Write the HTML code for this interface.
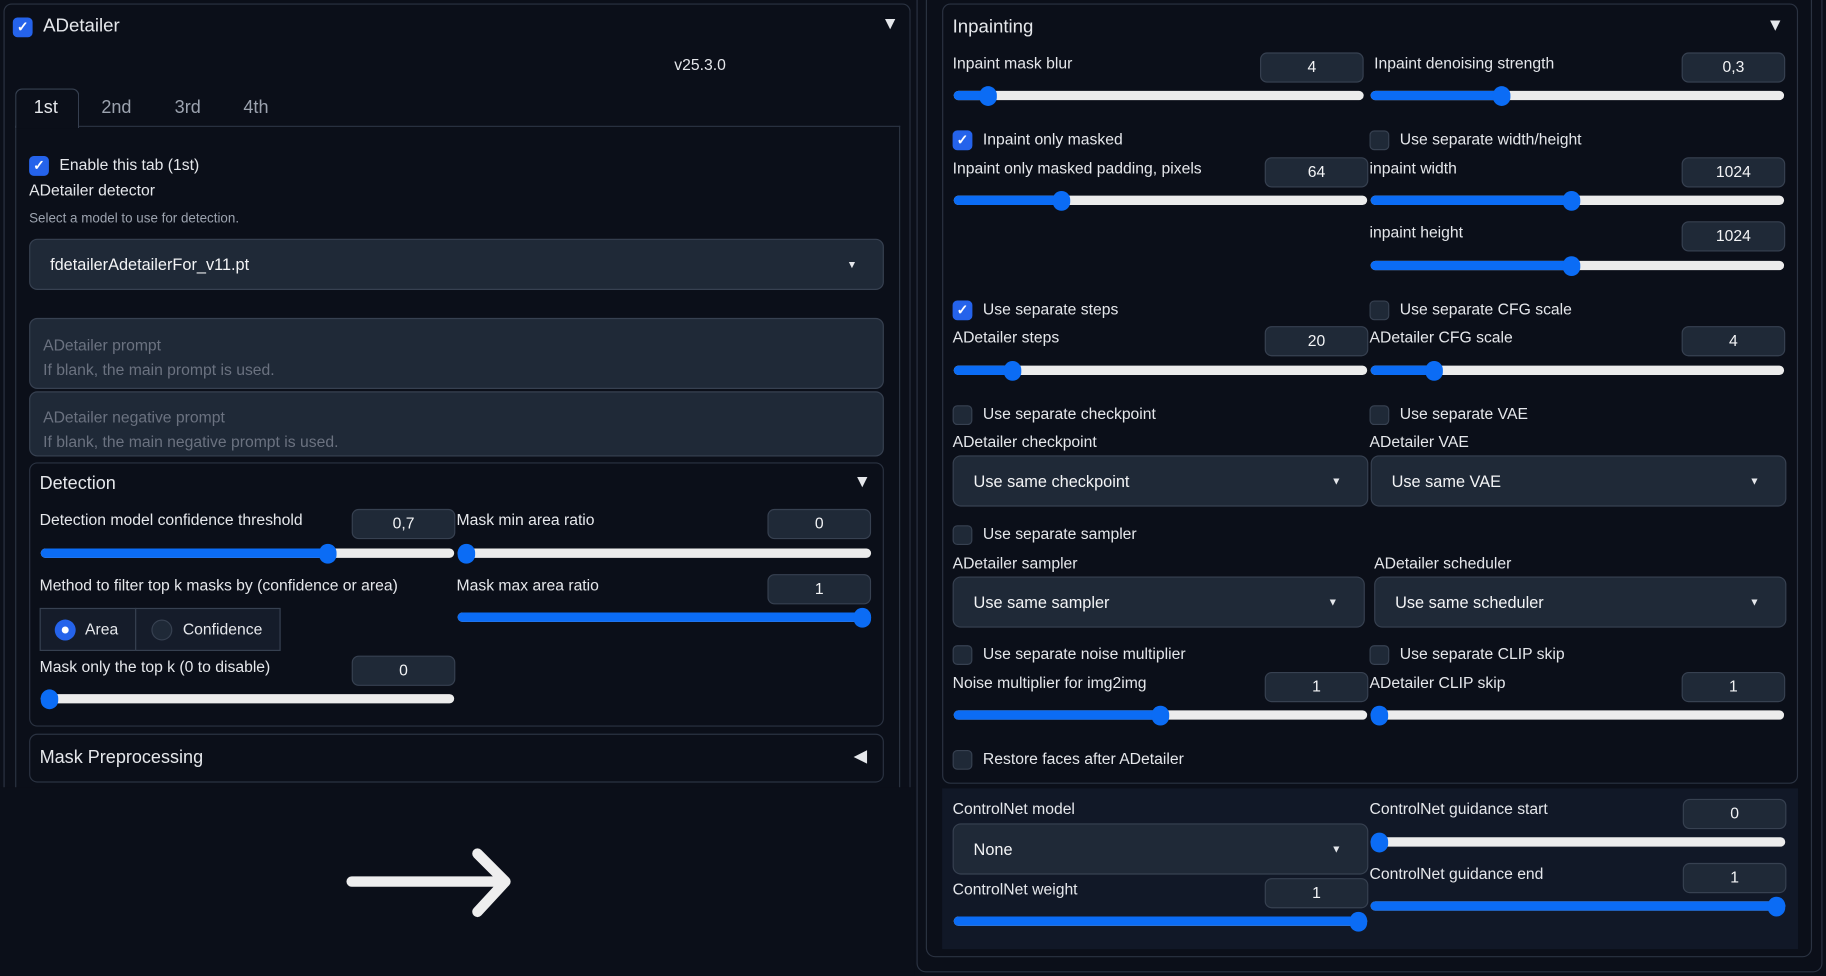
<!DOCTYPE html>
<html><head><meta charset="utf-8"><style>
html,body{margin:0;padding:0;background:#0b0f19;width:1826px;height:976px;overflow:hidden}
#w{position:absolute;left:0;top:0;width:1568px;height:838px;transform:scale(1.16454);transform-origin:0 0;font-family:"Liberation Sans",sans-serif;color:#e5e7eb}
#w div{position:absolute;box-sizing:border-box}
.l{font-size:13.5px;line-height:18px;white-space:nowrap;color:#e5e7eb}
.t{font-size:15.5px;line-height:20px;white-space:nowrap}
.g{color:#9ca3af}
.n{background:#1f2937;border:1px solid #374151;border-radius:6px;width:89px;height:26px;font-size:13.5px;line-height:24px;text-align:center;color:#f3f4f6}
.s{height:8px;border-radius:4px;background:#ececec}
.s .f{left:0;top:0;height:8px;border-radius:4px;background:#0b6cf5}
.s .h{top:-4px;width:15px;height:17px;border-radius:8px;background:#0b6cf5}
.c{width:17px;height:17px;border-radius:4px;background:#1f2937;border:1px solid #374151}
.c.k{background:#2563eb;border-color:#2563eb;color:#fff;font-size:12px;line-height:15px;text-align:center;font-weight:bold}
.d{background:#1f2937;border:1px solid #374151;border-radius:7px;height:44px;font-size:14px;line-height:42px;padding-left:17px;color:#f3f4f6;white-space:nowrap}
.d .a{right:22px;top:0;font-size:9px;line-height:42px;color:#e5e7eb}
.p{border:1px solid #2b3342;border-radius:7px}
</style></head><body><div id="w">

<!-- LEFT -->
<div style="left:3px;top:3px;width:779px;height:690px;border:1px solid #2b3342;border-bottom:none;border-radius:7px 7px 0 0"></div>
<div class="c k" style="left:11px;top:15px">✓</div>
<div class="t" style="left:37px;top:13px;font-size:16px">ADetailer</div>
<div style="left:757px;top:12px;font-size:15px">▼</div>
<div class="l" style="left:579px;top:47px">v25.3.0</div>
<div style="left:13px;top:76px;width:55px;height:34px;border:1px solid #374151;border-bottom:none;border-radius:6px 6px 0 0;background:#0b0f19;z-index:2"></div>
<div style="left:13px;top:108px;width:760px;height:580px;border:1px solid #2b3342;border-bottom:none"></div>
<div class="t" style="left:29px;top:83px;z-index:3">1st</div>
<div class="t g" style="left:87px;top:83px">2nd</div>
<div class="t g" style="left:150px;top:83px">3rd</div>
<div class="t g" style="left:209px;top:83px">4th</div>
<div class="c k" style="left:25px;top:134px">✓</div>
<div class="l" style="left:51px;top:133px">Enable this tab (1st)</div>
<div class="l" style="left:25px;top:155px">ADetailer detector</div>
<div class="l g" style="left:25px;top:179px;font-size:11.5px">Select a model to use for detection.</div>
<div class="d" style="left:25px;top:205px;width:734px">fdetailerAdetailerFor_v11.pt<div class="a">▼</div></div>
<div style="left:25px;top:273px;width:734px;height:61px;background:#1f2937;border:1px solid #374151;border-radius:7px;padding:12px 11px;font-size:13.5px;line-height:21px;color:#6b7280">ADetailer prompt<br>If blank, the main prompt is used.</div>
<div style="left:25px;top:336px;width:734px;height:56px;background:#1f2937;border:1px solid #374151;border-radius:7px;padding:11px 11px;font-size:13.5px;line-height:21px;color:#6b7280">ADetailer negative prompt<br>If blank, the main negative prompt is used.</div>

<div class="p" style="left:25px;top:397px;width:734px;height:227px"></div>
<div class="t" style="left:34px;top:406px">Detection</div>
<div style="left:733px;top:405px;font-size:15px">▼</div>
<div class="l" style="left:34px;top:438px">Detection model confidence threshold</div>
<div class="n" style="left:302px;top:437px">0,7</div>
<div class="s" style="left:35px;top:471px;width:355px"><div class="f" style="width:246px"></div><div class="h" style="left:239px"></div></div>
<div class="l" style="left:392px;top:438px">Mask min area ratio</div>
<div class="n" style="left:659px;top:437px">0</div>
<div class="s" style="left:393px;top:471px;width:355px"><div class="f" style="width:8px"></div><div class="h" style="left:0px"></div></div>
<div class="l" style="left:34px;top:494px">Method to filter top k masks by (confidence or area)</div>
<div style="left:34px;top:522px;width:83px;height:37px;background:#151c2a;border:1px solid #374151"></div>
<div style="left:116px;top:522px;width:125px;height:37px;background:#151c2a;border:1px solid #374151"></div>
<div style="left:47px;top:532px;width:18px;height:18px;border-radius:9px;background:#2563eb"></div>
<div style="left:53px;top:538px;width:6px;height:6px;border-radius:3px;background:#fff"></div>
<div class="l" style="left:73px;top:532px">Area</div>
<div style="left:130px;top:532px;width:18px;height:18px;border-radius:9px;background:#1f2937;border:1px solid #374151"></div>
<div class="l" style="left:157px;top:532px">Confidence</div>
<div class="l" style="left:392px;top:494px">Mask max area ratio</div>
<div class="n" style="left:659px;top:493px">1</div>
<div class="s" style="left:393px;top:526px;width:355px"><div class="f" style="width:355px"></div><div class="h" style="left:340px"></div></div>
<div class="l" style="left:34px;top:564px">Mask only the top k (0 to disable)</div>
<div class="n" style="left:302px;top:563px">0</div>
<div class="s" style="left:35px;top:596px;width:355px"><div class="f" style="width:8px"></div><div class="h" style="left:0px"></div></div>
<div class="p" style="left:25px;top:630px;width:734px;height:42px"></div>
<div class="t" style="left:34px;top:641px">Mask Preprocessing</div>
<div style="left:733px;top:640px;font-size:15px">◀</div>
<div style="left:0;top:676px;width:785px;height:162px;background:#0b0f19"></div>
<svg style="position:absolute;left:290px;top:725px" width="160" height="70"><path d="M12 32 H142 M120 8 L144 32 L120 58" fill="none" stroke="#eeeeee" stroke-width="9" stroke-linecap="round" stroke-linejoin="round"/></svg>

<!-- RIGHT -->
<div style="left:787px;top:-8px;width:778px;height:843px;border:1px solid #2b3342;border-radius:8px"></div>
<div style="left:795px;top:-8px;width:761px;height:830px;border:1px solid #2b3342;border-radius:8px"></div>
<div class="p" style="left:809px;top:3px;width:735px;height:670px"></div>
<div class="t" style="left:818px;top:14px;font-size:16px">Inpainting</div>
<div style="left:1517px;top:13px;font-size:15px">▼</div>

<div class="l" style="left:818px;top:46px">Inpaint mask blur</div>
<div class="n" style="left:1082px;top:45px">4</div>
<div class="s" style="left:819px;top:78px;width:352px"><div class="f" style="width:30px"></div><div class="h" style="left:22px"></div></div>
<div class="l" style="left:1180px;top:46px">Inpaint denoising strength</div>
<div class="n" style="left:1444px;top:45px">0,3</div>
<div class="s" style="left:1177px;top:78px;width:355px"><div class="f" style="width:113px"></div><div class="h" style="left:105px"></div></div>

<div class="c k" style="left:818px;top:112px">✓</div>
<div class="l" style="left:844px;top:111px">Inpaint only masked</div>
<div class="c" style="left:1176px;top:112px"></div>
<div class="l" style="left:1202px;top:111px">Use separate width/height</div>
<div class="l" style="left:818px;top:136px">Inpaint only masked padding, pixels</div>
<div class="n" style="left:1086px;top:135px">64</div>
<div class="s" style="left:819px;top:168px;width:355px"><div class="f" style="width:93px"></div><div class="h" style="left:85px"></div></div>
<div class="l" style="left:1176px;top:136px">inpaint width</div>
<div class="n" style="left:1444px;top:135px">1024</div>
<div class="s" style="left:1177px;top:168px;width:355px"><div class="f" style="width:173px"></div><div class="h" style="left:165px"></div></div>
<div class="l" style="left:1176px;top:191px">inpaint height</div>
<div class="n" style="left:1444px;top:190px">1024</div>
<div class="s" style="left:1177px;top:224px;width:355px"><div class="f" style="width:173px"></div><div class="h" style="left:165px"></div></div>

<div class="c k" style="left:818px;top:258px">✓</div>
<div class="l" style="left:844px;top:257px">Use separate steps</div>
<div class="c" style="left:1176px;top:258px"></div>
<div class="l" style="left:1202px;top:257px">Use separate CFG scale</div>
<div class="l" style="left:818px;top:281px">ADetailer steps</div>
<div class="n" style="left:1086px;top:280px">20</div>
<div class="s" style="left:819px;top:314px;width:355px"><div class="f" style="width:51px"></div><div class="h" style="left:43px"></div></div>
<div class="l" style="left:1176px;top:281px">ADetailer CFG scale</div>
<div class="n" style="left:1444px;top:280px">4</div>
<div class="s" style="left:1177px;top:314px;width:355px"><div class="f" style="width:55px"></div><div class="h" style="left:47px"></div></div>

<div class="c" style="left:818px;top:348px"></div>
<div class="l" style="left:844px;top:347px">Use separate checkpoint</div>
<div class="c" style="left:1176px;top:348px"></div>
<div class="l" style="left:1202px;top:347px">Use separate VAE</div>
<div class="l" style="left:818px;top:371px">ADetailer checkpoint</div>
<div class="l" style="left:1176px;top:371px">ADetailer VAE</div>
<div class="d" style="left:818px;top:391px;width:357px">Use same checkpoint<div class="a">▼</div></div>
<div class="d" style="left:1177px;top:391px;width:357px">Use same VAE<div class="a">▼</div></div>

<div class="c" style="left:818px;top:451px"></div>
<div class="l" style="left:844px;top:450px">Use separate sampler</div>
<div class="l" style="left:818px;top:475px">ADetailer sampler</div>
<div class="l" style="left:1180px;top:475px">ADetailer scheduler</div>
<div class="d" style="left:818px;top:495px;width:354px">Use same sampler<div class="a">▼</div></div>
<div class="d" style="left:1180px;top:495px;width:354px">Use same scheduler<div class="a">▼</div></div>

<div class="c" style="left:818px;top:554px"></div>
<div class="l" style="left:844px;top:553px">Use separate noise multiplier</div>
<div class="c" style="left:1176px;top:554px"></div>
<div class="l" style="left:1202px;top:553px">Use separate CLIP skip</div>
<div class="l" style="left:818px;top:578px">Noise multiplier for img2img</div>
<div class="n" style="left:1086px;top:577px">1</div>
<div class="s" style="left:819px;top:610px;width:355px"><div class="f" style="width:178px"></div><div class="h" style="left:170px"></div></div>
<div class="l" style="left:1176px;top:578px">ADetailer CLIP skip</div>
<div class="n" style="left:1444px;top:577px">1</div>
<div class="s" style="left:1177px;top:610px;width:355px"><div class="f" style="width:8px"></div><div class="h" style="left:0px"></div></div>

<div class="c" style="left:818px;top:644px"></div>
<div class="l" style="left:844px;top:643px">Restore faces after ADetailer</div>

<div style="left:809px;top:677px;width:735px;height:138px;background:#111827"></div>
<div class="l" style="left:818px;top:686px">ControlNet model</div>
<div class="d" style="left:818px;top:707px;width:357px">None<div class="a">▼</div></div>
<div class="l" style="left:818px;top:755px">ControlNet weight</div>
<div class="n" style="left:1086px;top:754px">1</div>
<div class="s" style="left:819px;top:787px;width:355px"><div class="f" style="width:355px"></div><div class="h" style="left:340px"></div></div>
<div class="l" style="left:1176px;top:686px">ControlNet guidance start</div>
<div class="n" style="left:1445px;top:686px">0</div>
<div class="s" style="left:1177px;top:719px;width:356px"><div class="f" style="width:8px"></div><div class="h" style="left:0px"></div></div>
<div class="l" style="left:1176px;top:742px">ControlNet guidance end</div>
<div class="n" style="left:1445px;top:741px">1</div>
<div class="s" style="left:1177px;top:774px;width:356px"><div class="f" style="width:356px"></div><div class="h" style="left:341px"></div></div>

</div></body></html>
